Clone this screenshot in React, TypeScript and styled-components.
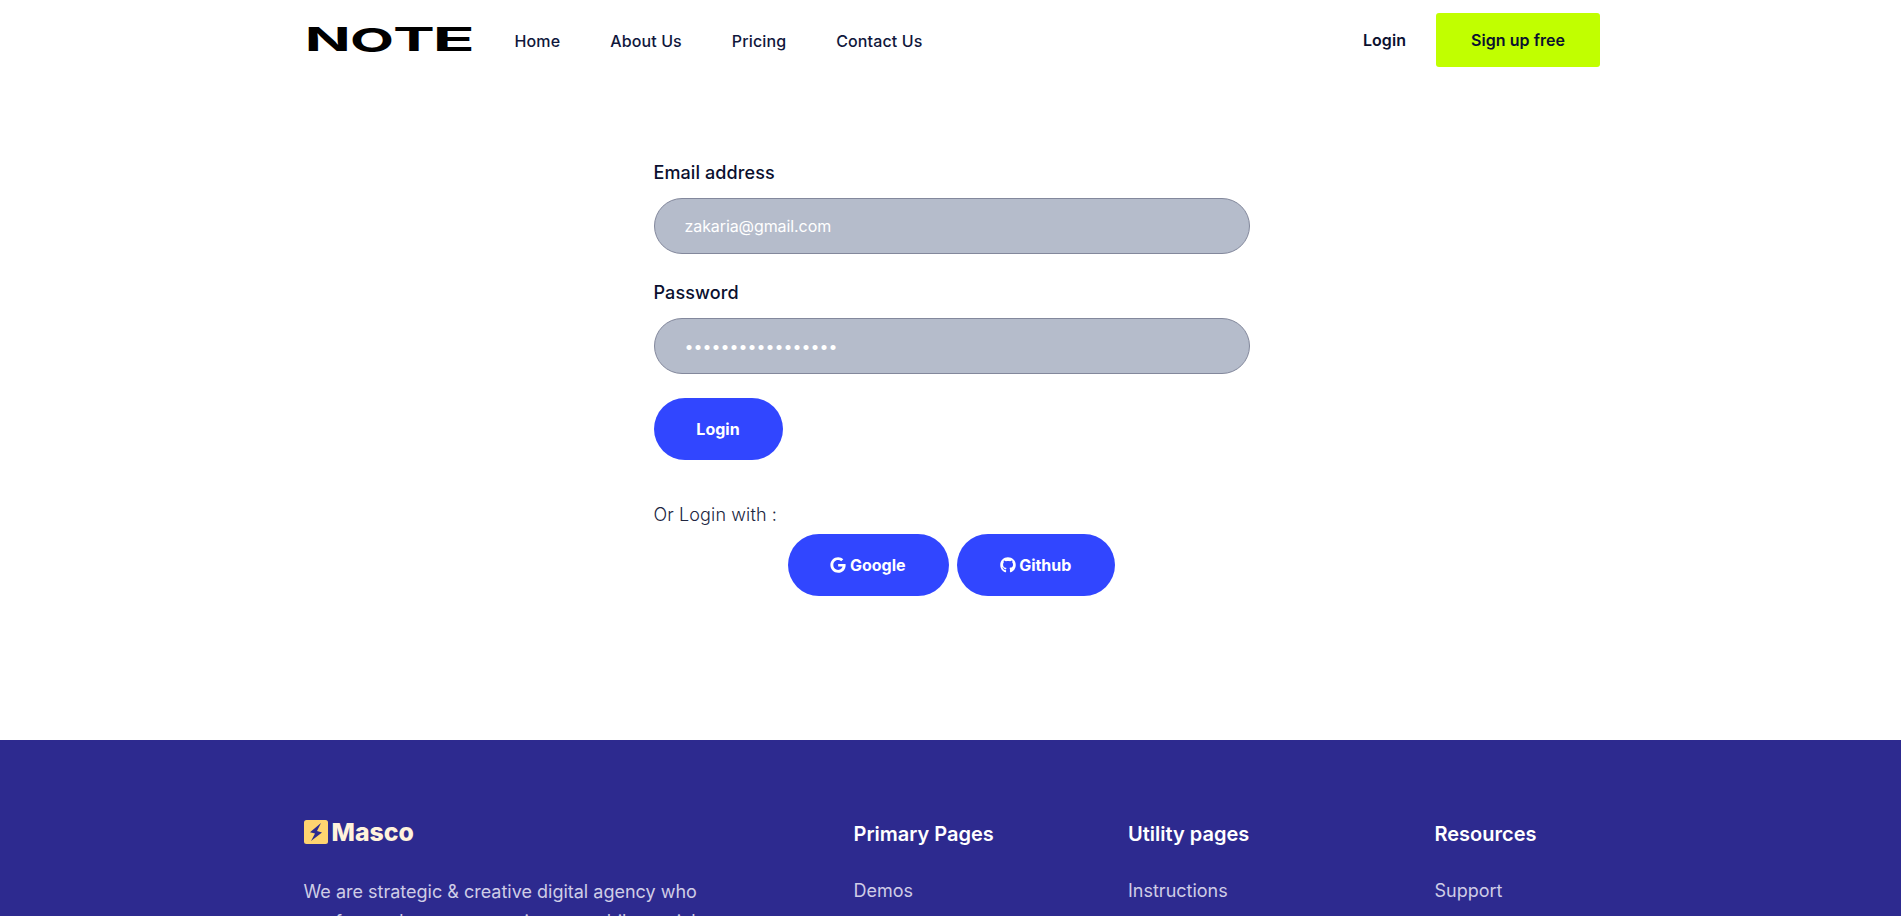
import React from "react";
import styled, { createGlobalStyle, css } from "styled-components";
import { FaGoogle, FaGithub } from "react-icons/fa";

const GlobalStyle = createGlobalStyle`
  * { box-sizing: border-box; }
  body { margin: 0; background: #fff; font-family: Inter, sans-serif; color: #0a102f; }
  h4, p, ul { margin: 0; padding: 0; }
  a { color: inherit; text-decoration: none; }
`;

const Page = styled.div`
  height: 916px;
  overflow: hidden;
  display: flex;
  flex-direction: column;
`;

const Container = styled.div`
  width: 1299px;
  margin: 0 auto;
  padding-left: 2.5px;
`;

const Header = styled(Container)`
  height: 80px;
  flex: none;
  display: flex;
  align-items: center;
`;

const Wordmark = styled.svg`
  display: block;
  flex: none;
  width: 172px;
  height: 40px;
  overflow: visible;
  text {
    font-family: Inter, sans-serif;
    font-weight: 700;
    fill: #000;
  }
`;

const Nav = styled.nav`
  display: flex;
  gap: 50px;
  margin-left: 39px;
  padding-top: 2px;
  color: #10173c;
  font-size: 16px;
  font-weight: 500;
  line-height: 24px;
  letter-spacing: 0.12px;
`;

const Actions = styled.div`
  display: flex;
  align-items: center;
  gap: 30px;
  margin-left: auto;
  font-size: 16px;
  font-weight: 600;
  letter-spacing: 0.05px;
`;

const SignUp = styled.a`
  display: flex;
  align-items: center;
  justify-content: center;
  width: 164px;
  height: 54px;
  border-radius: 3px;
  background: #c1ff00;
`;

const Main = styled.main`
  width: 596px;
  height: 660px;
  flex: none;
  margin: 0 auto;
  padding: 79px 0 0 1px;
`;

const Field = styled.label`
  display: block;
  height: 120px;

  & + & {
    height: 119px;
  }
`;

const FieldLabel = styled.span`
  display: block;
  height: 39px;
  font-size: 18px;
  font-weight: 500;
  line-height: 28px;
  letter-spacing: 0.1px;
`;

const Input = styled.input`
  display: block;
  appearance: none;
  width: 596px;
  height: 56px;
  padding: 0 30px;
  border: 1px solid #83889c;
  border-radius: 28px;
  background: #b5bccb;
  color: #fff;
  font-family: Inter, sans-serif;
  font-size: 16px;
  outline: none;

  &[type="email"] {
    letter-spacing: -0.09px;
  }
`;

const PillButton = styled.button<{ $width: number }>`
  display: flex;
  align-items: center;
  justify-content: center;
  gap: 3.5px;
  width: ${(p) => p.$width}px;
  height: 62px;
  padding: 0;
  border: 0;
  border-radius: 31px;
  background: #3146ff;
  color: #fff;
  font: 700 16px/24px Inter, sans-serif;
`;

const Alternative = styled.p`
  margin-top: 40px;
  color: #21263f;
  font-size: 18px;
  font-weight: 300;
  line-height: 30px;
  letter-spacing: 0.12px;
`;

const Providers = styled.div`
  display: flex;
  justify-content: center;
  gap: 8px;
  margin-top: 4px;
`;

const Footer = styled.footer`
  flex: 1;
  background: #2d2a8f;
`;

const FooterGrid = styled(Container)`
  display: grid;
  grid-template-columns: 550px 274.5px 306.5px 1fr;
  padding-top: 78px;
`;

const Brand = styled.a`
  display: flex;
  align-items: center;
  gap: 4px;
  height: 28px;
  color: #fff3dc;
  font-size: 24.8px;
  font-weight: 800;
`;

const muted = css`
  font-size: 18px;
  line-height: 30px;
  color: #cfcde6;
`;

const About = styled.p`
  ${muted}
  width: 420px;
  margin-top: 31px;
`;

const AboutLine = styled.span`
  display: block;
  letter-spacing: -0.1px;
`;

const ColumnTitle = styled.h4`
  height: 28px;
  padding-top: 2px;
  color: #fff;
  font-size: 20px;
  font-weight: 600;
  line-height: 28px;
`;

const ColumnLink = styled.a`
  ${muted}
  display: block;
  margin-top: 30px;
`;

const letters = [
  { char: "N", x: 0.7, y: 31, size: 32, width: 46 },
  { char: "O", x: 45.9, y: 31.5, size: 33, width: 44 },
  { char: "T", x: 89, y: 31, size: 32, width: 41.8 },
  { char: "E", x: 128.6, y: 31, size: 32, width: 42.4 },
];

const columns = [
  { title: "Primary Pages", link: "Demos" },
  { title: "Utility pages", link: "Instructions" },
  { title: "Resources", link: "Support" },
];

export default function App() {
  return (
    <Page>
      <GlobalStyle />
      <Header as="header">
        <Wordmark viewBox="0 0 172 40" aria-label="NOTE">
          {letters.map((l) => (
            <text
              key={l.char}
              x={l.x}
              y={l.y}
              fontSize={l.size}
              textLength={l.width}
              lengthAdjust="spacingAndGlyphs"
            >
              {l.char}
            </text>
          ))}
        </Wordmark>
        <Nav>
          {["Home", "About Us", "Pricing", "Contact Us"].map((item) => (
            <a href="#" key={item}>{item}</a>
          ))}
        </Nav>
        <Actions>
          <a href="#">Login</a>
          <SignUp href="#">Sign up free</SignUp>
        </Actions>
      </Header>
      <Main>
        <Field>
          <FieldLabel>Email address</FieldLabel>
          <Input type="email" defaultValue="zakaria@gmail.com" />
        </Field>
        <Field>
          <FieldLabel>Password</FieldLabel>
          <Input type="password" defaultValue="12345678901234567" />
        </Field>
        <PillButton $width={129}>Login</PillButton>
        <Alternative>Or Login with :</Alternative>
        <Providers>
          <PillButton $width={161}><FaGoogle />Google</PillButton>
          <PillButton $width={158}><FaGithub />Github</PillButton>
        </Providers>
      </Main>
      <Footer>
        <FooterGrid>
          <div>
            <Brand href="#">
              <svg width="24" height="24" viewBox="0 0 24 24">
                <rect width="24" height="24" rx="2.5" fill="#ffd470" />
                <path d="M17 3 6 12.3l5 1.3L7 21l11-8.6-5-1.4z" fill="#2d2a8f" />
              </svg>
              Masco
            </Brand>
            <About>
              We are strategic &amp; creative digital agency who{" "}
              <AboutLine>are focused on user experience, mobile, social</AboutLine>
            </About>
          </div>
          {columns.map((c) => (
            <div key={c.title}>
              <ColumnTitle>{c.title}</ColumnTitle>
              <ColumnLink href="#">{c.link}</ColumnLink>
            </div>
          ))}
        </FooterGrid>
      </Footer>
    </Page>
  );
}
